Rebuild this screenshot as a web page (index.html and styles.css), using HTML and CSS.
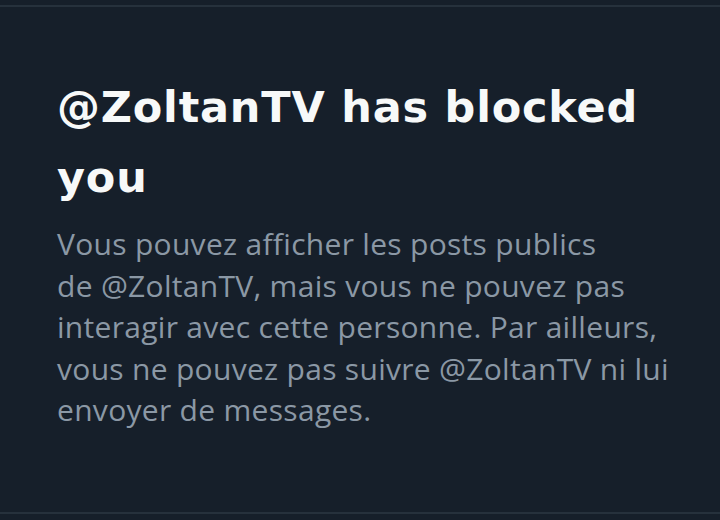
FILE: index.html
```html
<!DOCTYPE html>
<html lang="fr">
<head>
<meta charset="utf-8">
<link rel="stylesheet" href="styles.css">
</head>
<body>
<div class="page">
  <section class="panel">
    <h1 class="title">@ZoltanTV has blocked you</h1>
    <p class="desc">Vous pouvez afficher les posts publics de&nbsp;@ZoltanTV, mais vous ne pouvez pas interagir avec cette personne. Par ailleurs, vous ne pouvez pas suivre @ZoltanTV ni lui envoyer de messages.</p>
  </section>
</div>
</body>
</html>
```
FILE: styles.css
```css
html, body {
  margin: 0;
  padding: 0;
  background: #161f2a;
}
.page {
  width: 720px;
  height: 520px;
  padding-top: 5px;
  box-sizing: border-box;
  background: #161f2a;
}
.panel {
  height: 509px;
  box-sizing: border-box;
  border-top: 2px solid #26313c;
  border-bottom: 2px solid #26313c;
  padding: 65px 20px 0 57px;
}
.title {
  margin: 0;
  font-family: "DejaVu Sans", sans-serif;
  font-weight: 700;
  font-size: 43px;
  letter-spacing: 0.8px;
  line-height: 70px;
  color: #f7f9f9;
  width: 620px;
}
.desc {
  margin: 11px 0 0;
  font-family: "Open Sans", sans-serif;
  font-weight: 400;
  font-size: 30px;
  letter-spacing: 0.3px;
  line-height: 41.5px;
  color: #8b98a5;
  width: 643px;
}
```
